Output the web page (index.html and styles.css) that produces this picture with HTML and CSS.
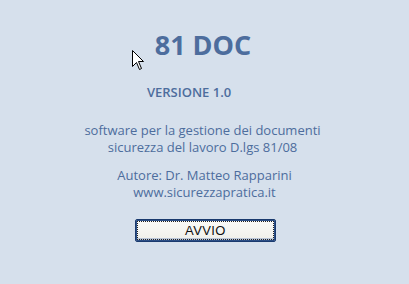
FILE: index.html
```html
<!DOCTYPE html>
<html lang="it">
<head>
    <meta charset="UTF-8">
    <title>81 DOC</title>
    <link rel="stylesheet" href="styles.css">
</head>
<body>
    <div class="splash">
        <h1 class="title">81 DOC</h1>
        <div class="version">VERSIONE 1.0</div>
        <p class="desc">software per la gestione dei documenti<br>sicurezza del lavoro D.lgs 81/08</p>
        <p class="author">Autore: Dr. Matteo Rapparini<br>www.sicurezzapratica.it</p>
        <button class="btn-start">AVVIO</button>
    </div>
    <svg class="cursor" width="13" height="21" viewBox="0 0 13 21">
        <path d="M0.5 0.5 L0.5 16.5 L4.5 12.5 L7.5 19.5 L9.5 18.5 L6.5 11.5 L11.5 11.5 Z" fill="#fff" stroke="#000" stroke-width="1"/>
    </svg>
</body>
</html>
```

FILE: styles.css
```css
body {
    margin: 0;
    background-color: #d6e0ec;
    font-family: "Open Sans", Arial, sans-serif;
    color: #4d6d9d;
    width: 409px;
    height: 284px;
    overflow: hidden;
    position: relative;
}
.splash {
    display: flex;
    flex-direction: column;
    align-items: center;
    padding-top: 31px;
    text-align: center;
}
.title {
    margin: 0 3px 0 0;
    font-size: 27px;
    line-height: 28px;
    font-weight: bold;
}
.version {
    margin-top: 25px;
    margin-right: 31px;
    font-size: 13px;
    line-height: 16px;
    font-weight: 600;
}
.desc {
    margin: 22px 4px 0 0;
    font-size: 13px;
    line-height: 17px;
}
.author {
    margin: 11px 0 0 0;
    font-size: 13px;
    line-height: 17px;
}
.btn-start {
    margin-top: 18px;
    margin-left: 2px;
    width: 141px;
    height: 23px;
    padding: 0;
    border: 1px solid #1a3a6e;
    border-radius: 2px;
    background: linear-gradient(#fbfbf9, #efefe9);
    box-shadow: inset 0 0 0 1px #2c4f86, inset 0 -2px 0 1px #b8c4d6;
    outline: 1px dotted #222;
    outline-offset: -3px;
    font-family: "Liberation Sans", Arial, sans-serif;
    font-size: 13px;
    letter-spacing: 0.4px;
    color: #111;
}
.cursor {
    position: absolute;
    left: 132px;
    top: 50px;
}
```
